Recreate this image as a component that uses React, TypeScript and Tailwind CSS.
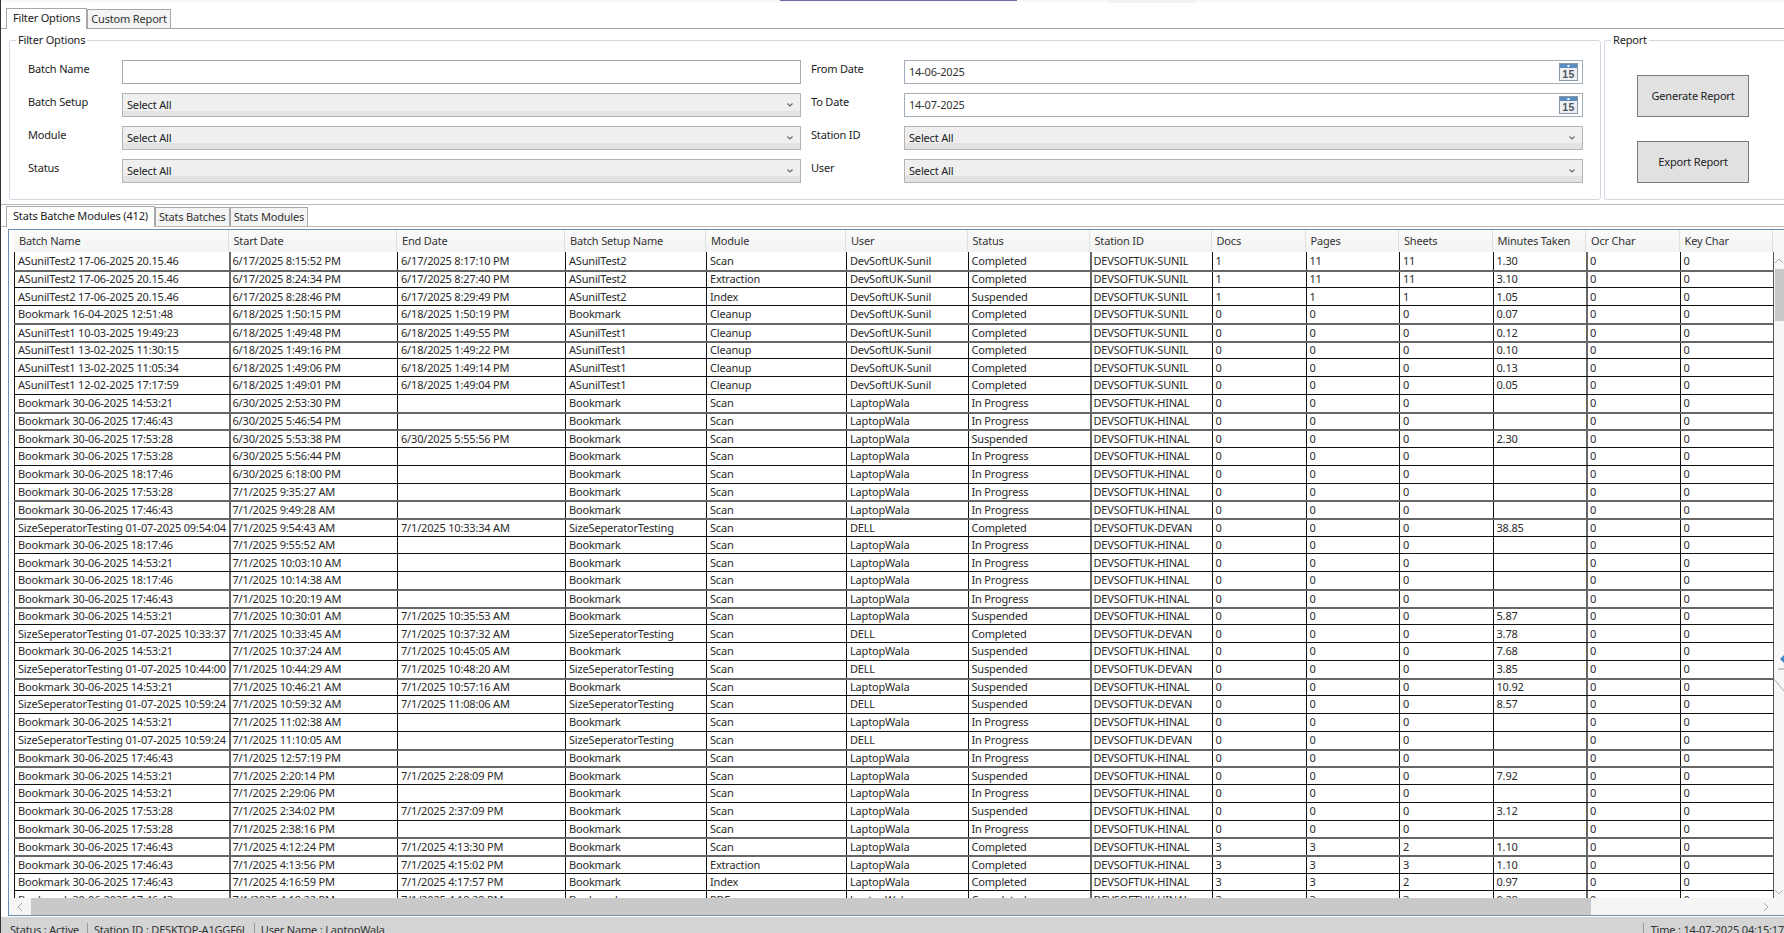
import React from "react";

const GRID = "grid grid-cols-[214.5px_168.5px_168px_141px_140px_121.5px_122px_122px_94px_93.5px_93.5px_93.5px_93.5px_93.5px]";

const BM = "Bookmark 30-06-2025 ";
const SZ = "SizeSeperatorTesting 01-07-2025 ";
const AS2 = "ASunilTest2 17-06-2025 20.15.46";

type Row = string[];
function a(name: string, s: string, e: string, setup: string, mod: string, status: string, d: string, p: string, sh: string, m: string): Row {
  return [name, s, e, setup, mod, "DevSoftUK-Sunil", status, "DEVSOFTUK-SUNIL", d, p, sh, m, "0", "0"];
}
function b(t: string, s: string, e: string, status: string, m: string, mod = "Scan", d = "0", p = "0", sh = "0"): Row {
  return [BM + t, s, e, "Bookmark", mod, "LaptopWala", status, "DEVSOFTUK-HINAL", d, p, sh, m, "0", "0"];
}
function z(t: string, s: string, e: string, status: string, m: string): Row {
  return [SZ + t, s, e, "SizeSeperatorTesting", "Scan", "DELL", status, "DEVSOFTUK-DEVAN", "0", "0", "0", m, "0", "0"];
}
const D = "7/1/2025 ";
const IP = "In Progress";
const SU = "Suspended";
const CO = "Completed";
const rows: Row[] = [
  a(AS2, "6/17/2025 8:15:52 PM", "6/17/2025 8:17:10 PM", "ASunilTest2", "Scan", CO, "1", "11", "11", "1.30"),
  a(AS2, "6/17/2025 8:24:34 PM", "6/17/2025 8:27:40 PM", "ASunilTest2", "Extraction", CO, "1", "11", "11", "3.10"),
  a(AS2, "6/17/2025 8:28:46 PM", "6/17/2025 8:29:49 PM", "ASunilTest2", "Index", SU, "1", "1", "1", "1.05"),
  a("Bookmark 16-04-2025 12:51:48", "6/18/2025 1:50:15 PM", "6/18/2025 1:50:19 PM", "Bookmark", "Cleanup", CO, "0", "0", "0", "0.07"),
  a("ASunilTest1 10-03-2025 19:49:23", "6/18/2025 1:49:48 PM", "6/18/2025 1:49:55 PM", "ASunilTest1", "Cleanup", CO, "0", "0", "0", "0.12"),
  a("ASunilTest1 13-02-2025 11:30:15", "6/18/2025 1:49:16 PM", "6/18/2025 1:49:22 PM", "ASunilTest1", "Cleanup", CO, "0", "0", "0", "0.10"),
  a("ASunilTest1 13-02-2025 11:05:34", "6/18/2025 1:49:06 PM", "6/18/2025 1:49:14 PM", "ASunilTest1", "Cleanup", CO, "0", "0", "0", "0.13"),
  a("ASunilTest1 12-02-2025 17:17:59", "6/18/2025 1:49:01 PM", "6/18/2025 1:49:04 PM", "ASunilTest1", "Cleanup", CO, "0", "0", "0", "0.05"),
  b("14:53:21", "6/30/2025 2:53:30 PM", "", IP, ""),
  b("17:46:43", "6/30/2025 5:46:54 PM", "", IP, ""),
  b("17:53:28", "6/30/2025 5:53:38 PM", "6/30/2025 5:55:56 PM", SU, "2.30"),
  b("17:53:28", "6/30/2025 5:56:44 PM", "", IP, ""),
  b("18:17:46", "6/30/2025 6:18:00 PM", "", IP, ""),
  b("17:53:28", D + "9:35:27 AM", "", IP, ""),
  b("17:46:43", D + "9:49:28 AM", "", IP, ""),
  z("09:54:04", D + "9:54:43 AM", D + "10:33:34 AM", CO, "38.85"),
  b("18:17:46", D + "9:55:52 AM", "", IP, ""),
  b("14:53:21", D + "10:03:10 AM", "", IP, ""),
  b("18:17:46", D + "10:14:38 AM", "", IP, ""),
  b("17:46:43", D + "10:20:19 AM", "", IP, ""),
  b("14:53:21", D + "10:30:01 AM", D + "10:35:53 AM", SU, "5.87"),
  z("10:33:37", D + "10:33:45 AM", D + "10:37:32 AM", CO, "3.78"),
  b("14:53:21", D + "10:37:24 AM", D + "10:45:05 AM", SU, "7.68"),
  z("10:44:00", D + "10:44:29 AM", D + "10:48:20 AM", SU, "3.85"),
  b("14:53:21", D + "10:46:21 AM", D + "10:57:16 AM", SU, "10.92"),
  z("10:59:24", D + "10:59:32 AM", D + "11:08:06 AM", SU, "8.57"),
  b("14:53:21", D + "11:02:38 AM", "", IP, ""),
  z("10:59:24", D + "11:10:05 AM", "", IP, ""),
  b("17:46:43", D + "12:57:19 PM", "", IP, ""),
  b("14:53:21", D + "2:20:14 PM", D + "2:28:09 PM", SU, "7.92"),
  b("14:53:21", D + "2:29:06 PM", "", IP, ""),
  b("17:53:28", D + "2:34:02 PM", D + "2:37:09 PM", SU, "3.12"),
  b("17:53:28", D + "2:38:16 PM", "", IP, ""),
  b("17:46:43", D + "4:12:24 PM", D + "4:13:30 PM", CO, "1.10", "Scan", "3", "3", "2"),
  b("17:46:43", D + "4:13:56 PM", D + "4:15:02 PM", CO, "1.10", "Extraction", "3", "3", "3"),
  b("17:46:43", D + "4:16:59 PM", D + "4:17:57 PM", CO, "0.97", "Index", "3", "3", "2"),
  b("17:46:43", D + "4:18:22 PM", D + "4:18:29 PM", CO, "0.28", "PDF", "3", "3", "3"),
];

const headers = ["Batch Name", "Start Date", "End Date", "Batch Setup Name", "Module", "User", "Status", "Station ID", "Docs", "Pages", "Sheets", "Minutes Taken", "Ocr Char", "Key Char"];

// rows whose top line falls between two screen pixels in the source, so it reads as a wider grey line
const softLines = new Set([1, 4, 5, 9, 10, 14, 15, 19, 20, 24, 28, 29, 33, 34]);
const softColumns = new Set([1, 7, 12]);

function Chevron() {
  return (
    <svg width="8" height="6" viewBox="0 0 8 6" className="shrink-0">
      <path d="M1.5 1.5 L4 4 L6.5 1.5" fill="none" stroke="#666" strokeWidth="1.1" />
    </svg>
  );
}

function Combo() {
  return (
    <div className="h-[24px] flex items-center justify-between pl-[4px] pr-[6px] border border-[#b4b4b4] bg-[linear-gradient(#efefef_0,#efefef_75%,#e3e3e3_75%)]">
      <span>Select All</span>
      <Chevron />
    </div>
  );
}

function Calendar() {
  return (
    <svg width="19" height="18" viewBox="0 0 19 18" className="shrink-0">
      <rect x="0.5" y="0.5" width="18" height="17" fill="#eef0f3" stroke="#8a96a3" />
      <rect x="1" y="1" width="17" height="4" fill="#5b8cbf" />
      <rect x="8.5" y="2" width="2" height="2" fill="#fff" />
      <text x="9.5" y="15" textAnchor="middle" fontSize="10.5" fontWeight="700" letterSpacing="0.5" fill="#4f5963" fontFamily="'Liberation Sans', sans-serif">15</text>
    </svg>
  );
}

function DateBox({ value }: { value: string }) {
  return (
    <div className="h-[24px] flex items-center justify-between pl-[4px] pr-[4px] border border-[#a3adb8] bg-white text-[#333]">
      <span>{value}</span>
      <Calendar />
    </div>
  );
}

function Label({ text, right }: { text: string; right?: boolean }) {
  return <div className={`h-[24px] leading-[17px] text-[#222] ${right ? "pl-[10px]" : ""}`}>{text}</div>;
}

function Tab({ label, active }: { label: string; active?: boolean }) {
  return active ? (
    <div className="h-[21px] flex items-center px-[6px] pb-[2px] bg-white border border-b-0 border-[#a8a8a8] text-[#222] -mb-px relative">{label}</div>
  ) : (
    <div className="h-[19px] flex items-center px-[3px] bg-[#f4f4f4] border border-b-0 border-[#a8a8a8] text-[#333]">{label}</div>
  );
}

export default function App() {
  return (
    <div className="w-[1784px] h-[933px] overflow-hidden bg-white flex flex-col border-l border-[#333] text-[11px] tracking-[-0.18px] text-[#222] font-['Noto_Sans',sans-serif]">
      {/* top strip */}
      <div className="h-[2px] bg-[#f7f7f7] shrink-0 flex">
        <div className="ml-[779px] w-[237px] h-[1px] bg-[#6f6fa8]" />
        <div className="ml-[92px] w-[87px] h-[3px] bg-[#f2f2f2]" />
      </div>

      {/* tabs */}
      <div className="h-[27px] shrink-0 flex items-end pl-[5px] border-b border-[#a8a8a8]">
        <Tab label="Filter Options" active />
        <Tab label="Custom Report" />
      </div>

      {/* filter area */}
      <div className="h-[175px] shrink-0 flex pl-[8px] pt-[4px] gap-[3px]">
        <fieldset className="w-[1592px] h-[167px] border border-[#d0d7e0] rounded-[3px] pl-[18px] pr-[17px] pt-[13px]">
          <legend className="-ml-[12px] px-[2px] leading-[14px] text-[#222]">Filter Options</legend>
          <div className="grid grid-cols-[94px_679px_103px_679px] gap-y-[9px]">
            <Label text="Batch Name" />
            <div className="h-[24px] border border-[#a8a8a8] bg-white" />
            <Label text="From Date" right />
            <DateBox value="14-06-2025" />
            <Label text="Batch Setup" />
            <Combo />
            <Label text="To Date" right />
            <DateBox value="14-07-2025" />
            <Label text="Module" />
            <Combo />
            <Label text="Station ID" right />
            <Combo />
            <Label text="Status" />
            <Combo />
            <Label text="User" right />
            <Combo />
          </div>
        </fieldset>
        <fieldset className="flex-1 h-[167px] border border-[#d0d7e0] border-r-0 rounded-l-[3px] pl-[32px] pt-[28px]">
          <legend className="-ml-[26px] px-[2px] leading-[14px] text-[#222]">Report</legend>
          <div className="w-[112px] flex flex-col gap-[24px]">
            <button className="h-[42px] bg-[#e1e1e1] border border-[#7a7a7a] text-[#222]">Generate Report</button>
            <button className="h-[42px] bg-[#e1e1e1] border border-[#7a7a7a] text-[#222]">Export Report</button>
          </div>
        </fieldset>
      </div>

      {/* stats tabs */}
      <div className="h-[23px] shrink-0 flex items-end pl-[5px] border-t border-b border-[#b8b8b8]">
        <Tab label="Stats Batche Modules (412)" active />
        <Tab label="Stats Batches" />
        <Tab label="Stats Modules" />
      </div>

      {/* grid */}
      <div className="ml-[7px] mt-[2px] h-[687px] shrink-0 flex flex-col border-t border-b border-l border-[#6b8fb0]">
        <div className="flex-1 min-h-0 flex">
          <div className="w-[5px] shrink-0 bg-white" />
          <div className="flex-1 min-w-0 overflow-hidden">
            <div className={`${GRID} h-[22px] bg-[linear-gradient(#fafafa,#f3f3f3)]`}>
              {headers.map((h) => (
                <div key={h} className="pl-[5px] flex items-center border-r border-[#e0e0e0] text-[#333] whitespace-nowrap overflow-hidden">{h}</div>
              ))}
            </div>
            {rows.map((r, i) => (
              <div
                key={i}
                className={`${GRID} h-[17.74px] border-r border-[#555] ${i === 0 ? "" : softLines.has(i) ? "border-t-2 border-t-[#666]" : "border-t border-t-[#111]"}`}
              >
                {r.map((c, j) => (
                  <div
                    key={j}
                    className={`flex items-center text-[#2a2a2a] whitespace-nowrap overflow-hidden ${softColumns.has(j) ? "pl-[2px] border-l-2 border-[#666]" : "pl-[3px] border-l border-[#111]"}`}
                  >
                    {c}
                  </div>
                ))}
              </div>
            ))}
          </div>
          {/* vertical scrollbar */}
          <div className="w-[10px] shrink-0 flex flex-col items-center bg-[#f7f7f7] relative">
            <svg width="10" height="8" viewBox="0 0 10 8" className="mt-[27px]"><path d="M1 6 L5 2 L9 6" fill="none" stroke="#aaa" /></svg>
            <div className="w-[9px] self-end h-[52px] mt-[4px] bg-[#c8c8c8]" />
            <div className="flex-1" />
            <svg width="10" height="8" viewBox="0 0 10 8" className="mb-[2px]"><path d="M1 2 L5 6 L9 2" fill="none" stroke="#aaa" /></svg>
            <svg width="10" height="40" viewBox="0 0 10 40" className="absolute top-[425px] left-0">
              <path d="M10 0 L6 4 L10 8 Z" fill="#3f87c4" />
              <path d="M4 14 H10" stroke="#999" />
              <path d="M0 24 L10 36" stroke="#aaa" />
            </svg>
          </div>
        </div>
        {/* horizontal scrollbar */}
        <div className="h-[17px] shrink-0 flex items-center bg-[#f5f5f5] pr-[14px]">
          <div className="w-[22px] flex justify-center">
            <svg width="8" height="10" viewBox="0 0 8 10"><path d="M6 1 L2 5 L6 9" fill="none" stroke="#aaa" /></svg>
          </div>
          <div className="w-[1560px] h-full bg-[#c9c9c9]" />
          <div className="flex-1" />
          <svg width="8" height="10" viewBox="0 0 8 10"><path d="M2 1 L6 5 L2 9" fill="none" stroke="#aaa" /></svg>
        </div>
      </div>

      {/* status bar */}
      <div className="flex-1 min-h-0 overflow-hidden flex bg-[#d4d4d4] text-[#333] pt-[6px] leading-[14px] whitespace-nowrap border-t border-white">
        <div className="pl-[9px] w-[87px] border-r border-[#999]">Status : Active</div>
        <div className="pl-[6px] w-[167px] border-r border-[#999]">Station ID : DESKTOP-A1GGF6L</div>
        <div className="pl-[6px] w-[1390px] border-r border-[#999]">User Name : LaptopWala</div>
        <div className="pl-[7px]">Time : 14-07-2025 04:15:17</div>
      </div>
    </div>
  );
}
